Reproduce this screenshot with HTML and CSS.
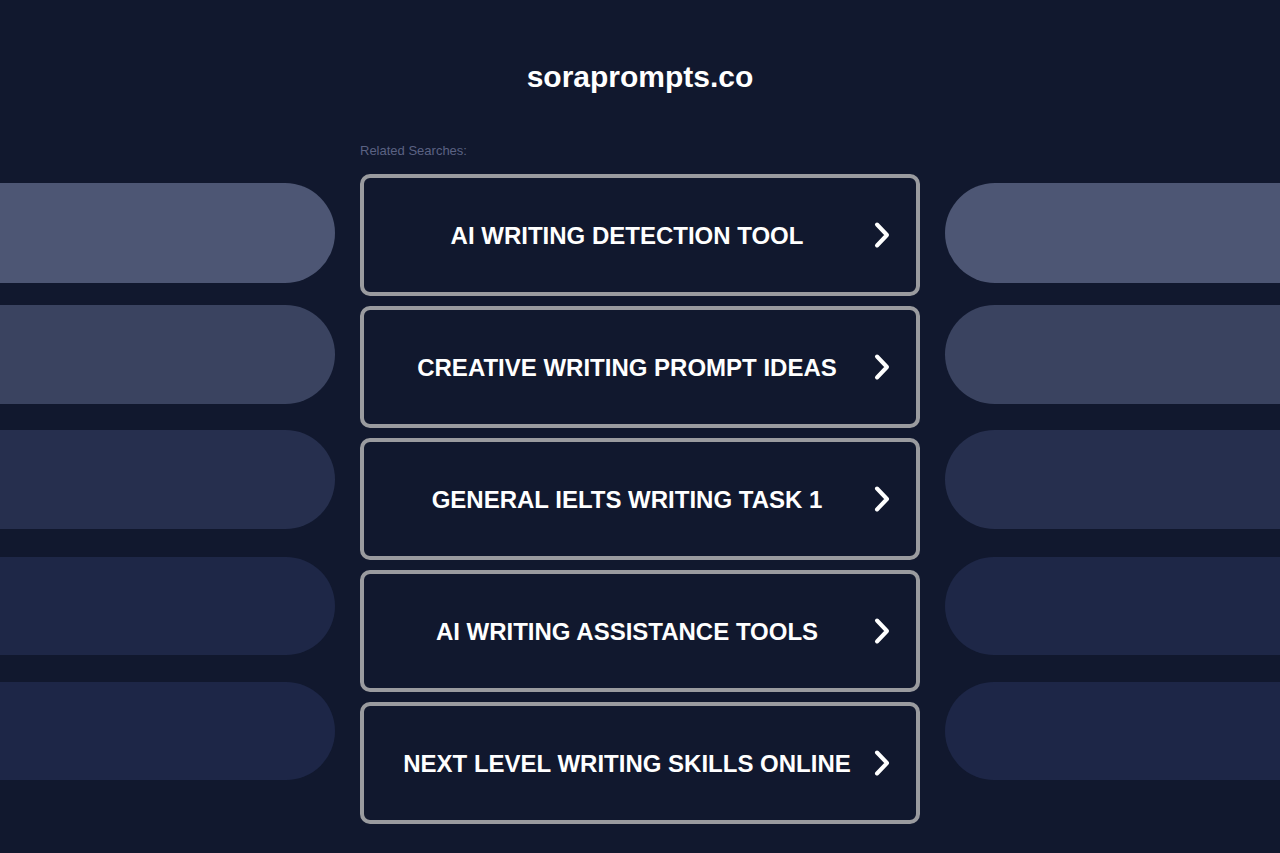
FILE: index.html
```html
<!DOCTYPE html>
<html lang="en">
<head>
    <meta charset="UTF-8">
    <meta name="viewport" content="width=device-width, initial-scale=1.0">
    <title>soraprompts.co</title>
    <link rel="stylesheet" href="styles.css">
</head>
<body>
    <header class="header">
        <h1 class="domain">soraprompts.co</h1>
    </header>

    <div class="layout">
        <div class="side side-left">
            <div class="pill pill-1"></div>
            <div class="pill pill-2"></div>
            <div class="pill pill-3"></div>
            <div class="pill pill-4"></div>
            <div class="pill pill-5"></div>
        </div>

        <main class="searches">
            <div class="searches-title">Related Searches:</div>
            <a class="search-link" href="#">
                <span class="search-text">AI WRITING DETECTION TOOL</span>
                <svg class="chevron" viewBox="0 0 24 30"><polyline points="7,4.5 17,15 7,25.5"/></svg>
            </a>
            <a class="search-link" href="#">
                <span class="search-text">CREATIVE WRITING PROMPT IDEAS</span>
                <svg class="chevron" viewBox="0 0 24 30"><polyline points="7,4.5 17,15 7,25.5"/></svg>
            </a>
            <a class="search-link" href="#">
                <span class="search-text">GENERAL IELTS WRITING TASK 1</span>
                <svg class="chevron" viewBox="0 0 24 30"><polyline points="7,4.5 17,15 7,25.5"/></svg>
            </a>
            <a class="search-link" href="#">
                <span class="search-text">AI WRITING ASSISTANCE TOOLS</span>
                <svg class="chevron" viewBox="0 0 24 30"><polyline points="7,4.5 17,15 7,25.5"/></svg>
            </a>
            <a class="search-link" href="#">
                <span class="search-text">NEXT LEVEL WRITING SKILLS ONLINE</span>
                <svg class="chevron" viewBox="0 0 24 30"><polyline points="7,4.5 17,15 7,25.5"/></svg>
            </a>
        </main>

        <div class="side side-right">
            <div class="pill pill-1"></div>
            <div class="pill pill-2"></div>
            <div class="pill pill-3"></div>
            <div class="pill pill-4"></div>
            <div class="pill pill-5"></div>
        </div>
    </div>
</body>
</html>
```

FILE: styles.css
```css
body {
    margin: 0;
    background-color: #11182e;
    font-family: "Liberation Sans", Arial, sans-serif;
    color: #fff;
    height: 853px;
    overflow: hidden;
}

.header {
    padding-top: 59px;
    text-align: center;
}

.domain {
    margin: 0;
    font-size: 30px;
    line-height: 36px;
    font-weight: bold;
    color: #fff;
}

.layout {
    display: grid;
    grid-template-columns: 1fr 560px 1fr;
    column-gap: 25px;
}

/* decorative pills on both sides */
.side {
    display: flex;
    flex-direction: column;
    padding-top: 88px;
}

.pill {
    height: 99px;
    margin-bottom: 22px;
}

.pill-1 {
    height: 100px;
}

.pill-3 {
    margin-top: 4px;
}

.pill-4 {
    margin-top: 6px;
    height: 98px;
}

.pill-5 {
    margin-top: 5px;
    height: 98px;
}

.side-left .pill {
    border-radius: 0 50px 50px 0;
}

.side-right .pill {
    border-radius: 50px 0 0 50px;
}

.pill-1 { background-color: #4d5674; }
.pill-2 { background-color: #3a4360; }
.pill-3 { background-color: #262f4e; }
.pill-4 { background-color: #1e2747; }
.pill-5 { background-color: #1d2647; }

.searches {
    padding-top: 48px;
}

.searches-title {
    font-size: 13px;
    line-height: 16px;
    color: #5b6283;
    margin-bottom: 15px;
}

.search-link {
    display: flex;
    align-items: center;
    box-sizing: border-box;
    height: 122px;
    margin-bottom: 10px;
    padding: 0 22px 0 20px;
    border: 4px solid #9a9b9f;
    border-radius: 10px;
    color: #fff;
    text-decoration: none;
}

.search-text {
    flex: 1;
    padding-top: 2px;
    text-align: center;
    font-size: 24px;
    font-weight: bold;
    white-space: nowrap;
}

.chevron {
    width: 24px;
    height: 30px;
    flex-shrink: 0;
}

.chevron polyline {
    fill: none;
    stroke: #fff;
    stroke-width: 4;
    stroke-linecap: round;
    stroke-linejoin: round;
}
```
